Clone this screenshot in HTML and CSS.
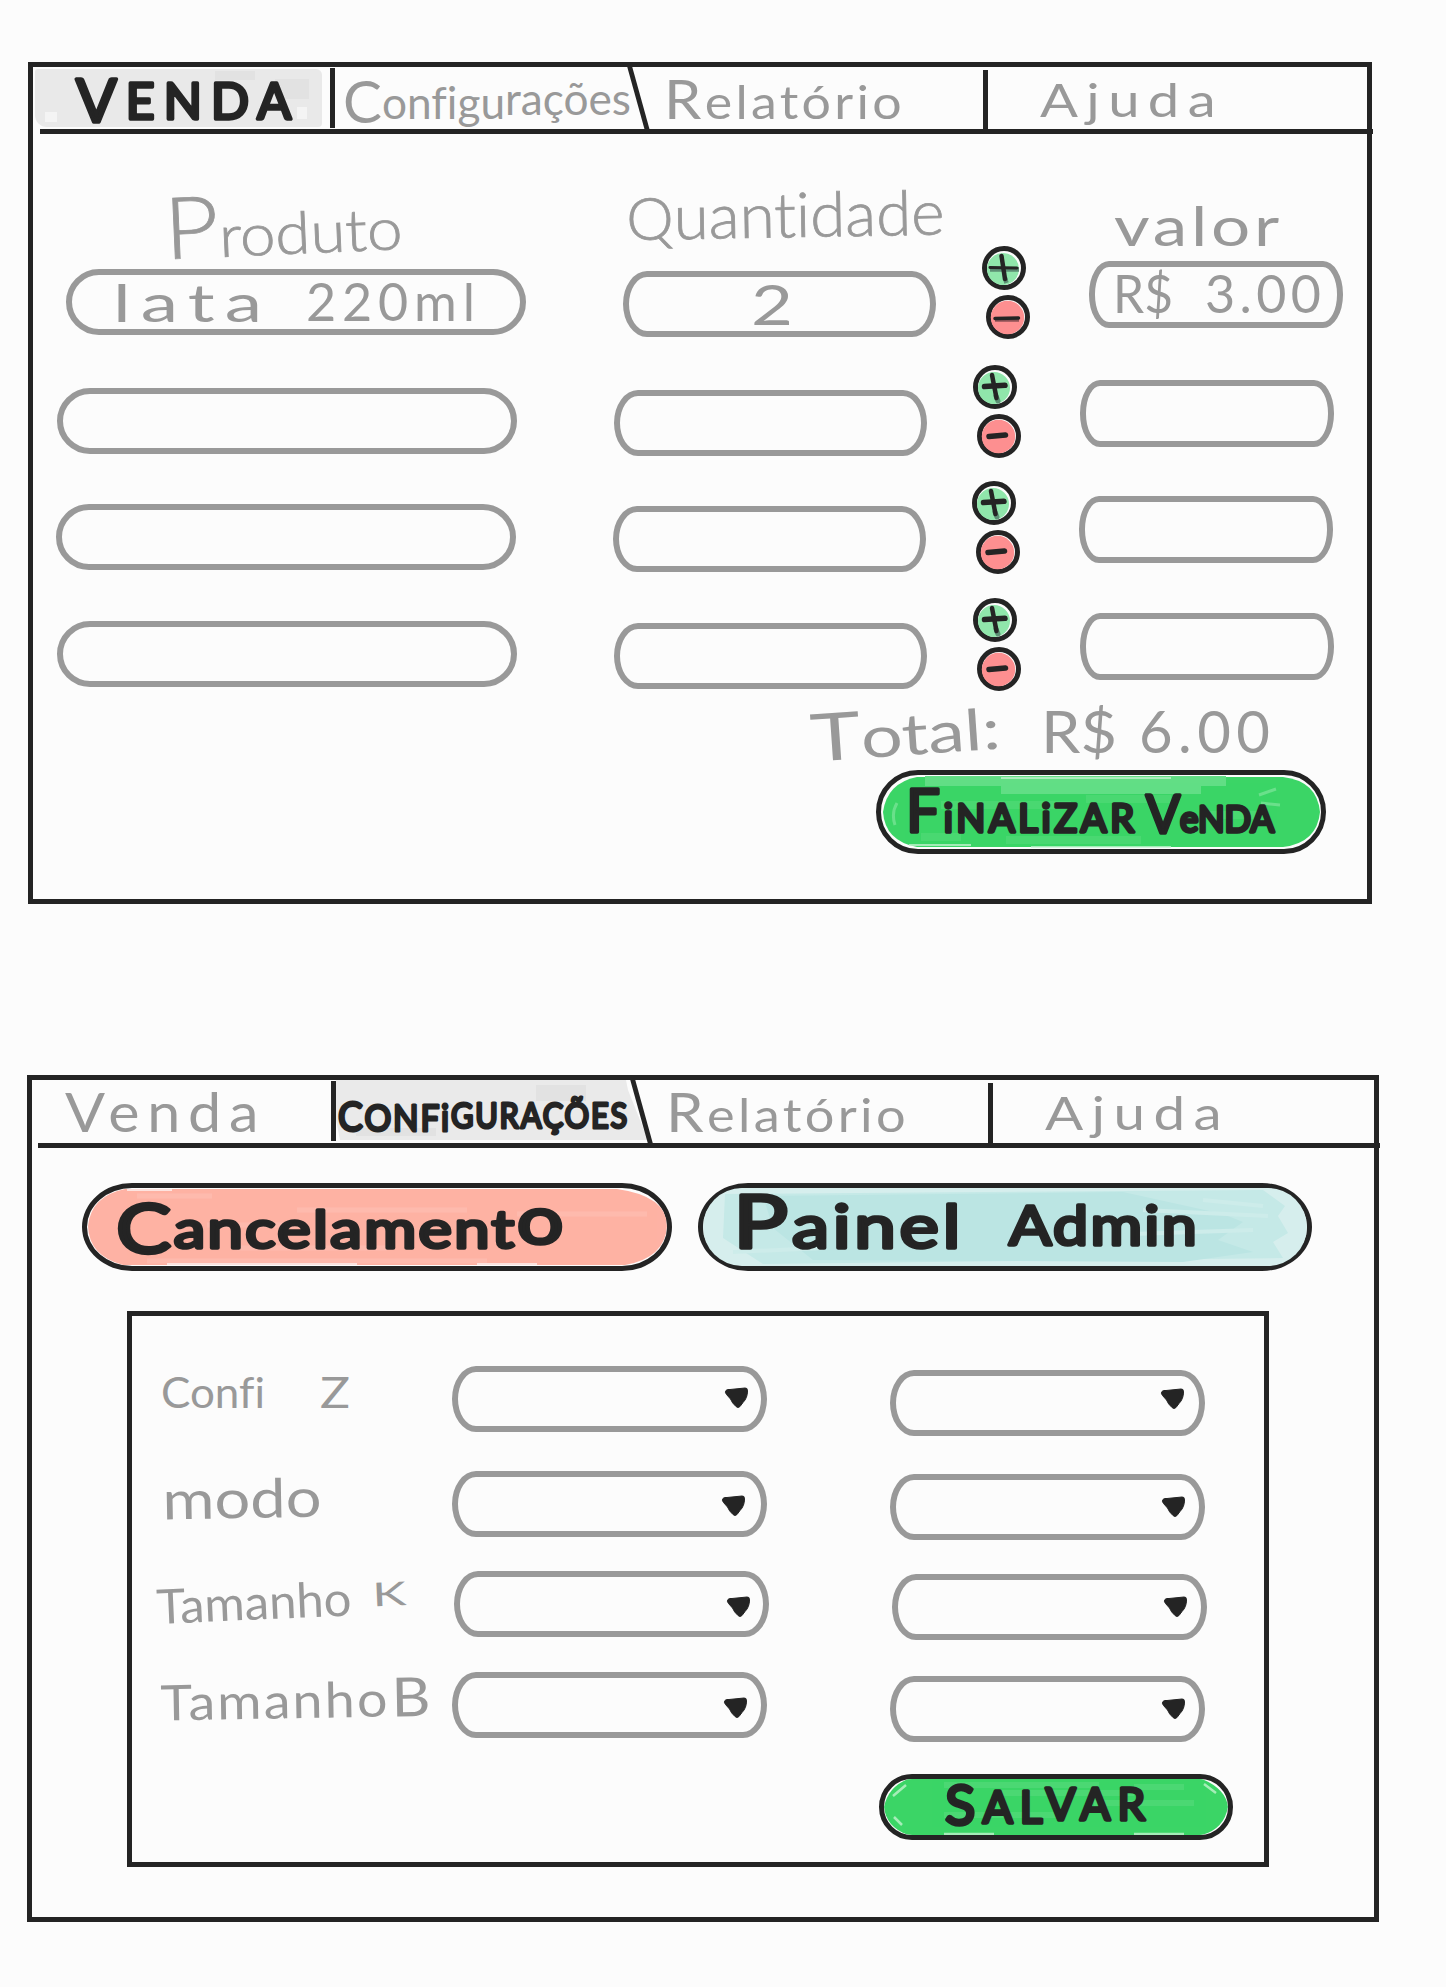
FILE: index.html
```html
<!DOCTYPE html>
<html lang="pt-BR">
<head>
<meta charset="utf-8">
<title>Venda e Configurações</title>
<link rel="stylesheet" href="styles.css">
</head>
<body>
<svg class="defs" width="0" height="0" aria-hidden="true">
  <symbol id="plus" viewBox="0 0 44 44">
    <circle cx="22" cy="22" r="19.5" fill="#fcfcfc" stroke="#242424" stroke-width="5"/>
    <ellipse cx="21" cy="23" rx="16" ry="16" fill="#90e6ab"/>
    <path d="M23 31l2 5" stroke="#5c8f74" stroke-width="5" stroke-linecap="round"/>
    <path d="M11.500 21.500L32 20.300" stroke="#242424" stroke-width="5.500" stroke-linecap="round"/>
    <path d="M19 10L23.500 33" stroke="#242424" stroke-width="4.500" stroke-linecap="round"/>
  </symbol>
  <symbol id="plus-thin" viewBox="0 0 44 44">
    <circle cx="22" cy="22" r="19.500" fill="#fcfcfc" stroke="#242424" stroke-width="5"/>
    <ellipse cx="21" cy="23" rx="16" ry="16" fill="#90e6ab"/>
    <path d="M8 23.500h29M23 32l1.500 5" stroke="#5c8f74" stroke-width="4.500"/>
    <path d="M8 21.500L35 22" stroke="#242424" stroke-width="3" stroke-linecap="round"/>
    <path d="M19.500 10L23 33" stroke="#242424" stroke-width="4.500" stroke-linecap="round"/>
  </symbol>
  <symbol id="minus" viewBox="0 0 44 44">
    <circle cx="22" cy="22" r="19.500" fill="#fcfcfc" stroke="#242424" stroke-width="5"/>
    <circle cx="21.500" cy="22.500" r="16.700" fill="#fd8f90"/>
    <path d="M12 22.500L28.500 21" stroke="#242424" stroke-width="5.500" stroke-linecap="round"/>
  </symbol>
  <symbol id="minus-thin" viewBox="0 0 44 44">
    <circle cx="22" cy="22" r="19.500" fill="#fcfcfc" stroke="#242424" stroke-width="5"/>
    <circle cx="21.500" cy="22.500" r="16.700" fill="#fd8f90"/>
    <path d="M9 25h24" stroke="#8e5256" stroke-width="3.500"/>
    <path d="M9 23.500L32.500 23" stroke="#242424" stroke-width="3.500" stroke-linecap="round"/>
  </symbol>
  <symbol id="arrow" viewBox="0 0 25 22">
    <path d="M2 3.500Q3 2 6 2.500L21 1Q23.500 0.500 23.500 4Q23.500 11 19 15.500L16 19.500Q14 21.500 12 19.500Q8 16 6.500 12L2.500 7.500Q0.500 5 2 3.500Z" fill="#242424" stroke="#242424"/>
  </symbol>
</svg>

<section class="panel panel-sale">
  <nav class="tabs">
    <div class="tab tab-sale active-sale">
      <svg class="ink bold" width="217" height="62"><text y="55" textLength="215"><tspan font-size="60">V</tspan><tspan font-size="50" dy="-3">ENDA</tspan></text></svg>
    </div>
    <i class="sep"></i>
    <div class="tab tab-config">
      <svg class="ink" width="286" height="62"><text font-size="44" x="-2" y="54" textLength="288" lengthAdjust="spacingAndGlyphs"><tspan font-size="58" dy="2">C</tspan><tspan dy="-4">onfigu</tspan><tspan dy="-4">rações</tspan></text></svg>
    </div>
    <i class="sep slanted"></i>
    <div class="tab tab-report">
      <svg class="ink" width="233" height="62"><text class="airy" font-size="47" x="-5" y="52" textLength="241" lengthAdjust="spacingAndGlyphs"><tspan font-size="54">R</tspan>elatório</text></svg>
    </div>
    <i class="sep short"></i>
    <div class="tab tab-help">
      <svg class="ink" width="175" height="62"><text class="airy wide" font-size="47" y="50" textLength="184" lengthAdjust="spacingAndGlyphs">Ajuda</text></svg>
    </div>
  </nav>

  <div class="row head">
    <svg class="ink light head-product" width="228" height="111"><text class="rise-3" font-size="58" x="-10" y="125" textLength="238" lengthAdjust="spacingAndGlyphs"><tspan font-size="86">P</tspan>roduto</text></svg>
    <svg class="ink light head-amount" width="318" height="111"><text class="rise-1" font-size="62" y="106" textLength="318" lengthAdjust="spacingAndGlyphs"><tspan font-size="58">Q</tspan>uantidade</text></svg>
    <span></span>
    <svg class="ink head-value" width="163" height="111"><text class="airy" font-size="55" y="112" textLength="169" lengthAdjust="spacingAndGlyphs">valor</text></svg>
  </div>

  <div class="row first">
    <div class="field product"><svg class="ink" width="362" height="54"><text class="airy wide" font-size="52" y="47" textLength="159" lengthAdjust="spacingAndGlyphs">lata</text><text font-size="52" x="193" y="46" textLength="169">220ml</text></svg></div>
    <div class="field amount"><svg class="ink" width="48" height="54"><text font-size="57" x="2" y="48" textLength="42" lengthAdjust="spacingAndGlyphs">2</text></svg></div>
    <div class="stepper">
      <svg width="44" height="44"><use href="#plus-thin"/></svg>
      <svg class="less" width="44" height="44"><use href="#minus-thin"/></svg>
    </div>
    <div class="field value"><svg class="ink" width="206" height="55"><text font-size="52" x="-2" y="46" textLength="60" lengthAdjust="spacingAndGlyphs">R$</text><text font-size="52" x="90" y="46" textLength="116">3.00</text></svg></div>
  </div>
  <div class="row second">
    <div class="field product"></div>
    <div class="field amount"></div>
    <div class="stepper">
      <svg width="44" height="44"><use href="#plus"/></svg>
      <svg class="less" width="44" height="44"><use href="#minus"/></svg>
    </div>
    <div class="field value"></div>
  </div>
  <div class="row third">
    <div class="field product"></div>
    <div class="field amount"></div>
    <div class="stepper">
      <svg width="44" height="44"><use href="#plus"/></svg>
      <svg class="less" width="44" height="44"><use href="#minus"/></svg>
    </div>
    <div class="field value"></div>
  </div>
  <div class="row fourth">
    <div class="field product"></div>
    <div class="field amount"></div>
    <div class="stepper">
      <svg width="44" height="44"><use href="#plus"/></svg>
      <svg class="less" width="44" height="44"><use href="#minus"/></svg>
    </div>
    <div class="field value"></div>
  </div>

  <div class="total">
    <svg class="ink" width="190" height="79"><text class="rise-4" font-size="57" y="71" textLength="190" lengthAdjust="spacingAndGlyphs"><tspan font-size="66">T</tspan>otal:</text></svg>
    <svg class="ink" width="225" height="79"><text font-size="58" x="-3" y="62" textLength="76" lengthAdjust="spacingAndGlyphs">R$</text><text font-size="58" x="95" y="62" textLength="131">6.00</text></svg>
  </div>

  <div class="button finish">
    <svg class="paint" viewBox="0 0 440 74" preserveAspectRatio="none">
      <path d="M36 2H402Q436 6 439 37Q436 68 402 72H36Q4 66 2 37Q6 8 36 2Z" fill="#3bd566"/>
      <path d="M44 6H345M120 14H320M300 6H345" stroke="#62de85" stroke-width="10"/>
      <path d="M60 30H190M205 24H290M40 62H80M125 65H260M320 40H380" stroke="#54da79" stroke-width="8" opacity=".6"/>
      <path d="M16 28Q10 38 14 50M378 20L395 14M380 28L399 30" stroke="#8be8a4" stroke-width="3" fill="none" opacity=".6"/>
      <path d="M28 70H90M150 72H290M120 3H290" stroke="#c8f2d3" stroke-width="1.500"/>
    </svg>
    <svg class="ink bold" width="366" height="74"><text font-size="38" x="-2" y="57" textLength="228"><tspan font-size="60">F</tspan><tspan>iNALiZAR</tspan></text><text font-size="36" x="238" y="58" textLength="128" lengthAdjust="spacingAndGlyphs"><tspan font-size="52">V</tspan><tspan dy="-1">eNDA</tspan></text></svg>
  </div>
</section>

<section class="panel panel-config">
  <nav class="tabs">
    <div class="tab tab-sale">
      <svg class="ink" width="193" height="62"><text class="airy wide" font-size="54" y="52" textLength="201" lengthAdjust="spacingAndGlyphs">Venda</text></svg>
    </div>
    <i class="sep"></i>
    <div class="tab tab-config active-config">
      <svg class="shade" width="316" height="72" viewBox="0 0 316 72"><path d="M0 10H290L292 20L312 70H4L0 50Z" fill="#eaeaea"/><path d="M200 15h50v16h-50zM20 58h80v8H20z" fill="#e2e2e2"/></svg>
      <svg class="ink bold tight" width="288" height="62"><text class="airy small" font-size="37" y="51" textLength="291" lengthAdjust="spacingAndGlyphs"><tspan font-size="41">C</tspan>ONFi<tspan font-size="34" dy="-3">GURAÇÕES</tspan></text></svg>
    </div>
    <i class="sep slanted"></i>
    <div class="tab tab-report">
      <svg class="ink" width="235" height="62"><text class="airy" font-size="47" x="-5" y="52" textLength="243" lengthAdjust="spacingAndGlyphs"><tspan font-size="54">R</tspan>elatório</text></svg>
    </div>
    <i class="sep short"></i>
    <div class="tab tab-help">
      <svg class="ink" width="176" height="62"><text class="airy wide" font-size="47" y="50" textLength="185" lengthAdjust="spacingAndGlyphs">Ajuda</text></svg>
    </div>
  </nav>

  <div class="actions">
    <div class="button cancel">
      <svg class="paint" viewBox="0 0 580 78" preserveAspectRatio="none">
        <path d="M38 1H530Q580 8 580 38Q578 70 538 77H36Q2 68 1 38Q4 8 38 1Z" fill="#feb2a4"/>
        <path d="M50 8H125M210 22H380M150 60H300M430 26H560M120 37H220M60 73H400" stroke="#fec0b5" stroke-width="5" opacity=".6"/>
        <path d="M40 2H85M80 76H270M390 76H450" stroke="#fde3df" stroke-width="2"/>
      </svg>
      <svg class="ink bold" width="446" height="78"><text class="airy small" font-size="52" x="-2" y="61" textLength="450" lengthAdjust="spacingAndGlyphs"><tspan font-size="68" dy="4">C</tspan><tspan dy="-5">ancelament</tspan><tspan font-size="68" dy="-4">o</tspan></text></svg>
    </div>
    <div class="button admin">
      <svg class="paint" viewBox="0 0 604 78" preserveAspectRatio="none">
        <path d="M0 0H604V78H0Z" fill="#d6eeed"/>
        <path d="M22 6L560 2L582 18L575 28L585 45L570 54L580 70L60 76L20 50Z" fill="#c5e9e7"/>
        <path d="M60 8L420 4L520 26L540 34L515 52L550 64L480 74L110 72L70 40Z" fill="#bbe5e3"/>
        <path d="M440 22L565 28M430 46L550 42M500 12L560 18M30 64L120 60" stroke="#cdecea" stroke-width="4"/>
      </svg>
      <svg class="ink bold" width="224" height="78"><text class="airy" font-size="60" x="-3" y="60" textLength="231" lengthAdjust="spacingAndGlyphs"><tspan font-size="74">P</tspan>ainel</text></svg>
      <svg class="ink bold" width="188" height="78"><text class="airy small" font-size="54" y="57" textLength="190" lengthAdjust="spacingAndGlyphs">Admin</text></svg>
    </div>
  </div>

  <div class="settings">
    <div class="option one">
      <svg class="ink" width="290" height="70"><text font-size="42" x="29" y="42" textLength="104" lengthAdjust="spacingAndGlyphs">Confi</text><text font-size="43" x="188" y="42" textLength="30" lengthAdjust="spacingAndGlyphs">Z</text></svg>
      <div class="field select"><svg width="25" height="22"><use href="#arrow"/></svg></div>
      <div class="field select right"><svg width="25" height="22"><use href="#arrow"/></svg></div>
    </div>
    <div class="option two">
      <svg class="ink" width="290" height="70"><text class="rise-1" font-size="54" x="30" y="49" textLength="159" lengthAdjust="spacingAndGlyphs">modo</text></svg>
      <div class="field select"><svg width="25" height="22"><use href="#arrow"/></svg></div>
      <div class="field select right"><svg width="25" height="22"><use href="#arrow"/></svg></div>
    </div>
    <div class="option three">
      <svg class="ink" width="290" height="70"><g class="rise-3"><text font-size="48" x="23" y="54" textLength="195" lengthAdjust="spacingAndGlyphs">Tamanho</text><text font-size="33" x="239" y="46" textLength="34" lengthAdjust="spacingAndGlyphs">K</text></g></svg>
      <div class="field select"><svg width="25" height="22"><use href="#arrow"/></svg></div>
      <div class="field select right"><svg width="25" height="22"><use href="#arrow"/></svg></div>
    </div>
    <div class="option four">
      <svg class="ink" width="300" height="70"><g class="rise-1"><text class="airy small" font-size="49" x="28" y="49" textLength="229" lengthAdjust="spacingAndGlyphs">Tamanho</text><text font-size="54" x="259" y="49" textLength="39" lengthAdjust="spacingAndGlyphs">B</text></g></svg>
      <div class="field select"><svg width="25" height="22"><use href="#arrow"/></svg></div>
      <div class="field select right"><svg width="25" height="22"><use href="#arrow"/></svg></div>
    </div>
    <div class="button save">
      <svg class="paint" viewBox="0 0 344 56" preserveAspectRatio="none">
        <path d="M24 0H318Q342 10 344 28Q340 50 318 56H24Q2 48 0 28Q4 8 24 0Z" fill="#3bd566"/>
        <path d="M60 6H215M110 14H250M210 24H310M60 36H180M250 8H300" stroke="#58db7c" stroke-width="6" opacity=".6"/>
        <path d="M9 17L22 6M10 38L18 46M320 5L332 14M60 55H110M250 55H300" stroke="#a5edb8" stroke-width="2.500"/>
      </svg>
      <svg class="ink bold" width="198" height="56"><text font-size="44" x="-2" y="46" textLength="200"><tspan font-size="56">S</tspan><tspan dy="-2">AL</tspan><tspan dy="-3">VAR</tspan></text></svg>
    </div>
  </div>
</section>
</body>
</html>
```

FILE: styles.css
```css
* {
  box-sizing: border-box;
}

body {
  margin: 0;
  min-height: 1987px;
  padding-top: 62px;
  background: #fcfcfc;
  font-family: Lato, "Open Sans", sans-serif;
}

svg {
  display: block;
  flex: none;
}

.defs {
  position: absolute;
}

.panel {
  border: 5px solid #242424;
}

.panel-sale {
  width: 1344px;
  height: 842px;
  margin-left: 28px;
}

.panel-config {
  width: 1352px;
  height: 847px;
  margin: 171px 0 0 27px;
}

/* Lettering */
.ink {
  position: relative;
  overflow: visible;
  fill: #999;
  font-family: Lato, "Open Sans", sans-serif;
  font-weight: 400;
  font-variant-ligatures: none;
}

.ink.light {
  font-weight: 300;
  stroke: #999;
  stroke-width: 0.8px;
}

.ink.bold {
  fill: #242424;
  stroke: #242424;
  stroke-width: 3.5px;
  stroke-linejoin: round;
}

.ink.tight {
  stroke-width: 3px;
}

.airy { letter-spacing: 3px; }
.airy.wide { letter-spacing: 7px; }
.airy.small { letter-spacing: 2px; }

.rise-1 { transform: rotate(-1deg); }
.rise-3 { transform: rotate(-2.5deg); }
.rise-4 { transform: rotate(-4deg); }

/* Tabs */
.tabs {
  display: flex;
  width: 1333px;
  height: 67px;
  margin-left: 7px;
  border-bottom: 5px solid #242424;
}

.panel-config .tabs {
  width: 1342px;
  height: 68px;
  margin-left: 6px;
}

.tab {
  position: relative;
  height: 62px;
}

.tab-sale { width: 290px; padding-left: 36px; }
.tab-config { width: 301px; padding-left: 10px; }
.tab-report { width: 342px; padding-left: 28px; }
.tab-help { padding-left: 52px; }

.panel-config .tab-sale { width: 293px; padding-left: 27px; }
.panel-config .tab-config { width: 303px; padding-left: 2px; }
.panel-config .tab-report { width: 344px; padding-left: 27px; }

.active-sale::before {
  content: "";
  position: absolute;
  left: -5px;
  top: 2px;
  width: 287px;
  height: 58px;
  border-radius: 3px 6px 4px 12px;
  background:
    linear-gradient(#e2e2e2, #e2e2e2) 240px 10px / 34px 20px no-repeat,
    linear-gradient(#e2e2e2, #e2e2e2) 180px 2px / 40px 9px no-repeat,
    linear-gradient(#f4f4f4, #f4f4f4) 10px 43px / 12px 10px no-repeat,
    linear-gradient(#f4f4f4, #f4f4f4) 262px 38px / 10px 12px no-repeat,
    #e9e9e9;
}

.shade {
  position: absolute;
  left: 0;
  top: -10px;
}

.sep {
  position: relative;
  flex: none;
  width: 5px;
  height: 60px;
  margin-top: 1px;
  background: #242424;
}

.sep.slanted {
  height: 63px;
  margin-top: 0;
  transform: skewX(15.5deg);
}

.sep.short {
  height: 60px;
  margin-top: 3px;
}

/* Sale rows */
.row {
  display: grid;
  grid-template-columns: 557px 359px 107px 254px;
  align-items: start;
  width: 1277px;
  height: 93px;
}

.row.head {
  height: 112px;
  margin-left: 33px;
}

.head-product { margin-left: 104px; }
.head-amount { margin-left: 2px; }
.head-value { margin-left: 25px; }

.row.first { margin-left: 33px; }
.row.second { margin: 26px 0 0 24px; }
.row.third { margin: 23px 0 0 23px; }
.row.fourth { margin: 24px 0 0 24px; }

.field {
  height: 66px;
  border: 6px solid #999;
}

.product {
  width: 460px;
  margin-top: 23px;
  padding-left: 41px;
  border-radius: 33px;
}

.amount {
  width: 313px;
  margin-top: 25px;
  padding-left: 120px;
  border-radius: 24px / 33px;
}

.value {
  width: 254px;
  height: 67px;
  margin-top: 15px;
  padding-left: 20px;
  border-radius: 20px / 33px;
}

.stepper {
  display: flex;
  flex-direction: column;
  gap: 5px;
}

.less {
  margin-left: 4px;
}

.total {
  display: flex;
  gap: 47px;
  height: 79px;
  margin-left: 774px;
}

/* Buttons */
.button {
  position: relative;
  display: flex;
  border: 5px solid #242424;
}

.paint {
  position: absolute;
  inset: 0;
  width: 100%;
  height: 100%;
  border-radius: 39px;
}

.finish {
  width: 450px;
  height: 84px;
  margin-left: 843px;
  padding-left: 27px;
  border-radius: 42px;
}

.actions {
  display: flex;
  gap: 26px;
  margin: 35px 0 0 50px;
}

.cancel,
.admin {
  height: 88px;
  border-radius: 50px / 44px;
}

.cancel {
  width: 590px;
  padding-left: 31px;
}

.admin {
  width: 614px;
  gap: 49px;
  padding-left: 33px;
}

/* Settings */
.settings {
  width: 1142px;
  height: 556px;
  margin: 40px 0 0 95px;
  padding-top: 50px;
  border: 5px solid #242424;
}

.option {
  display: grid;
  grid-template-columns: 320px 438px 315px;
  align-items: start;
  height: 70px;
}

.option.two { margin-top: 35px; }
.option.three { margin-top: 30px; }
.option.four { margin-top: 31px; }

.select {
  display: flex;
  justify-content: flex-end;
  width: 315px;
  padding: 18px 13px 0 0;
  border-radius: 24px / 33px;
}

.select.right { margin-top: 3px; padding-top: 16px; }
.one .select { padding: 15px 12px 0 0; }
.one .right { margin-top: 4px; padding: 12px 14px 0 0; }
.two .select:not(.right) { padding-right: 15px; }
.three { margin-left: 2px; }
.three .ink { margin-left: -2px; }
.three .select:not(.right) { padding: 19px 12px 0 0; }
.four .select:not(.right) { padding-top: 19px; }
.four .right { margin-top: 4px; }

.save {
  width: 354px;
  height: 66px;
  margin: 32px 0 0 747px;
  padding-left: 63px;
  border-radius: 33px;
}
```
